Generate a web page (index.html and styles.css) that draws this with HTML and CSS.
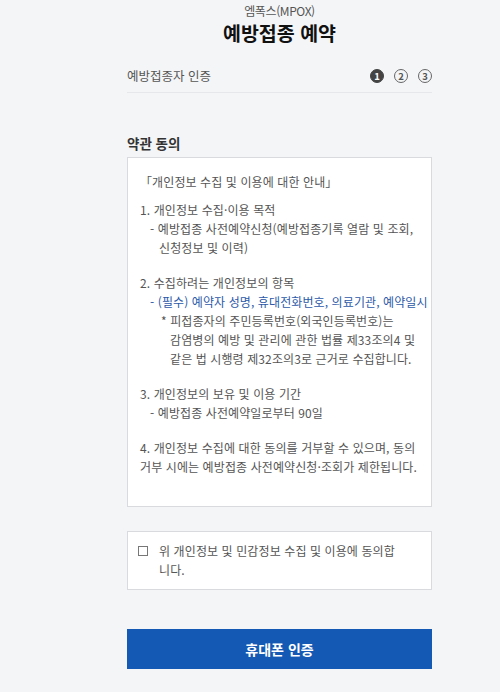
FILE: index.html
```html
<!DOCTYPE html>
<html lang="ko">
<head>
<meta charset="utf-8">
<link rel="stylesheet" href="styles.css">
</head>
<body>
<div class="page">
  <header class="head">
    <div class="sub">엠폭스(MPOX)</div>
    <h1 class="title">예방접종 예약</h1>
  </header>
  <div class="steprow">
    <span class="steplabel">예방접종자 인증</span>
    <div class="steps">
      <span class="step on">1</span>
      <span class="step">2</span>
      <span class="step">3</span>
    </div>
  </div>
  <h2 class="sect">약관 동의</h2>
  <div class="terms">
    <p class="ln intro">「개인정보 수집 및 이용에 대한 안내」</p>
    <div class="blk">
      <p class="ln">1. 개인정보 수집·이용 목적</p>
      <p class="ln d1">- 예방접종 사전예약신청(예방접종기록 열람 및 조회,</p>
      <p class="ln d2">신청정보 및 이력)</p>
    </div>
    <div class="blk">
      <p class="ln">2. 수집하려는 개인정보의 항목</p>
      <p class="ln d1 blue">- (필수) 예약자 성명, 휴대전화번호, 의료기관, 예약일시</p>
      <p class="ln d3">* 피접종자의 주민등록번호(외국인등록번호)는</p>
      <p class="ln d4">감염병의 예방 및 관리에 관한 법률 제33조의4 및</p>
      <p class="ln d4">같은 법 시행령 제32조의3로 근거로 수집합니다.</p>
    </div>
    <div class="blk">
      <p class="ln">3. 개인정보의 보유 및 이용 기간</p>
      <p class="ln d1">- 예방접종 사전예약일로부터 90일</p>
    </div>
    <div class="blk">
      <p class="ln">4. 개인정보 수집에 대한 동의를 거부할 수 있으며, 동의</p>
      <p class="ln">거부 시에는 예방접종 사전예약신청·조회가 제한됩니다.</p>
    </div>
  </div>
  <label class="agree">
    <span class="cb"></span>
    <span class="agreetext">위 개인정보 및 민감정보 수집 및 이용에 동의합니다.</span>
  </label>
  <button class="btn" type="button">휴대폰 인증</button>
</div>
</body>
</html>
```

FILE: styles.css
```css
* { box-sizing: border-box; }
html, body { margin: 0; padding: 0; }
body {
  background: #f4f5f7;
  font-family: "Noto Sans CJK KR", "Noto Sans", sans-serif;
  color: #444;
}
.page {
  width: 305px;
  margin-left: 127px;
  display: flex;
  flex-direction: column;
}
.head {
  display: flex;
  flex-direction: column;
  align-items: center;
  padding-top: 2px;
}
.sub {
  font-size: 12px;
  line-height: 18px;
  color: #555;
  letter-spacing: -0.4px;
}
.title {
  margin: 0;
  font-size: 19.5px;
  line-height: 26px;
  font-weight: 700;
  color: #111;
}
.steprow {
  margin-top: 16px;
  height: 31px;
  display: flex;
  align-items: center;
  justify-content: space-between;
  border-bottom: 1px solid #e6e7ea;
  padding-bottom: 3px;
}
.steplabel {
  font-size: 12.5px;
  color: #555;
}
.steps {
  display: flex;
  gap: 10px;
}
.step {
  width: 14px;
  height: 14px;
  border-radius: 50%;
  border: 1px solid #666;
  font-size: 9.5px;
  line-height: 12px;
  text-align: center;
  color: #555;
  font-weight: 700;
}
.step.on {
  background: #444;
  border-color: #444;
  color: #fff;
}
.sect {
  margin: 40px 0 0;
  font-size: 13.5px;
  line-height: 20px;
  font-weight: 700;
  color: #333;
}
.terms {
  margin-top: 4px;
  background: #fff;
  border: 1px solid #d9dadd;
  padding: 14px 12px 30px;
  display: flex;
  flex-direction: column;
  gap: 16px;
}
.terms .intro { margin-bottom: -7px; }
.blk { display: flex; flex-direction: column; }
.ln {
  margin: 0;
  font-size: 12px;
  line-height: 19px;
  color: #555;
  letter-spacing: 0.1px;
  white-space: nowrap;
}
.d1 { padding-left: 10px; }
.d2 { padding-left: 19px; }
.d3 { padding-left: 21px; }
.d4 { padding-left: 30px; }
.blue { color: #2c5aa8; }
.agree {
  margin-top: 24px;
  background: #fff;
  border: 1px solid #d9dadd;
  padding: 9px 20px 10px 10px;
  display: flex;
  gap: 11px;
  align-items: flex-start;
}
.cb {
  flex: none;
  width: 10px;
  height: 10px;
  border: 1px solid #777;
  margin-top: 5px;
  background: #fff;
}
.agreetext {
  font-size: 12px;
  line-height: 19px;
  color: #555;
  letter-spacing: 0.1px;
  width: 240px;
}
.btn {
  margin-top: 39px;
  height: 40px;
  border: none;
  background: #1459b4;
  color: #fff;
  font-family: inherit;
  font-size: 14px;
  font-weight: 700;
  cursor: pointer;
}
```
